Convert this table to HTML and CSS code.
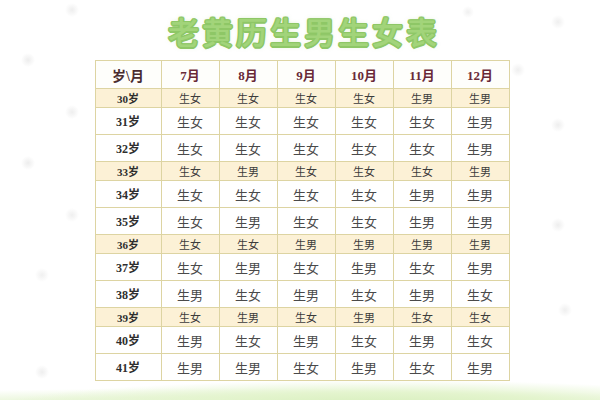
FILE: index.html
```html
<!DOCTYPE html>
<html lang="zh">
<head>
<meta charset="utf-8">
<title>老黄历生男生女表</title>
<link rel="stylesheet" href="styles.css">
</head>
<body>
<div class="page">
  <h1 class="title">老黄历生男生女表</h1>
  <table class="chart">
    <colgroup>
      <col class="c-label"><col class="c-m"><col class="c-m"><col class="c-m"><col class="c-m"><col class="c-m"><col class="c-m">
    </colgroup>
    <tr class="head"><th class="corner">岁\月</th><th>7月</th><th>8月</th><th>9月</th><th>10月</th><th>11月</th><th>12月</th></tr>
    <tr class="short"><td class="age">30岁</td><td>生女</td><td>生女</td><td>生女</td><td>生女</td><td>生男</td><td>生男</td></tr>
    <tr class="tall"><td class="age">31岁</td><td>生女</td><td>生女</td><td>生女</td><td>生女</td><td>生女</td><td>生男</td></tr>
    <tr class="tall"><td class="age">32岁</td><td>生女</td><td>生女</td><td>生女</td><td>生女</td><td>生女</td><td>生男</td></tr>
    <tr class="short"><td class="age">33岁</td><td>生女</td><td>生男</td><td>生女</td><td>生女</td><td>生女</td><td>生男</td></tr>
    <tr class="tall"><td class="age">34岁</td><td>生女</td><td>生女</td><td>生女</td><td>生女</td><td>生男</td><td>生男</td></tr>
    <tr class="tall"><td class="age">35岁</td><td>生女</td><td>生男</td><td>生女</td><td>生女</td><td>生男</td><td>生男</td></tr>
    <tr class="short"><td class="age">36岁</td><td>生女</td><td>生女</td><td>生男</td><td>生男</td><td>生男</td><td>生男</td></tr>
    <tr class="tall"><td class="age">37岁</td><td>生女</td><td>生男</td><td>生女</td><td>生男</td><td>生女</td><td>生男</td></tr>
    <tr class="tall"><td class="age">38岁</td><td>生男</td><td>生女</td><td>生男</td><td>生女</td><td>生男</td><td>生女</td></tr>
    <tr class="short"><td class="age">39岁</td><td>生女</td><td>生男</td><td>生女</td><td>生男</td><td>生女</td><td>生女</td></tr>
    <tr class="tall"><td class="age">40岁</td><td>生男</td><td>生女</td><td>生男</td><td>生女</td><td>生男</td><td>生女</td></tr>
    <tr class="tall"><td class="age">41岁</td><td>生男</td><td>生男</td><td>生女</td><td>生男</td><td>生女</td><td>生男</td></tr>
  </table>
</div>
</body>
</html>
```
FILE: styles.css
```css
html, body {
  margin: 0;
  padding: 0;
}
body {
  width: 600px;
  height: 400px;
  overflow: hidden;
  background:
    radial-gradient(ellipse 380px 26px at 380px 406px, #d6eebb 0%, #e3f4cd 50%, rgba(255,255,255,0) 100%),
    radial-gradient(ellipse 560px 22px at 240px 410px, #e0f1ca 0%, #ecf7de 60%, rgba(255,255,255,0) 100%),
    radial-gradient(circle 7px at 72px 10px, #eeeeee, rgba(255,255,255,0)),
    radial-gradient(circle 7px at 28px 60px, #ededed, rgba(255,255,255,0)),
    radial-gradient(circle 7px at 72px 112px, #eeeeee, rgba(255,255,255,0)),
    radial-gradient(circle 7px at 28px 163px, #ededed, rgba(255,255,255,0)),
    radial-gradient(circle 7px at 72px 215px, #efefef, rgba(255,255,255,0)),
    radial-gradient(circle 7px at 42px 275px, #f0f0f0, rgba(255,255,255,0)),
    radial-gradient(circle 7px at 42px 372px, #eeeeee, rgba(255,255,255,0)),
    radial-gradient(circle 6px at 468px 12px, #f0f0f0, rgba(255,255,255,0)),
    radial-gradient(circle 7px at 558px 22px, #efefef, rgba(255,255,255,0)),
    radial-gradient(circle 7px at 518px 70px, #efefef, rgba(255,255,255,0)),
    radial-gradient(circle 7px at 558px 125px, #eeeeee, rgba(255,255,255,0)),
    radial-gradient(circle 7px at 558px 225px, #eeeeee, rgba(255,255,255,0)),
    radial-gradient(circle 7px at 565px 310px, #efefef, rgba(255,255,255,0)),
    #ffffff;
  font-family: "Noto Sans CJK SC", sans-serif;
}
.page {
  display: flex;
  flex-direction: column;
  align-items: center;
}
.title {
  margin: 13px 0 0 8px;
  height: 47px;
  font-family: "Noto Sans CJK SC", sans-serif;
  font-weight: 500;
  font-size: 31px;
  line-height: 36px;
  letter-spacing: 3px;
  color: #a2d47a;
  -webkit-text-stroke: 3px #ffffff;
  paint-order: stroke fill;
  text-shadow:
    1.5px 0 0 #8ec766, -1.5px 0 0 #8ec766, 0 1.5px 0 #8ec766, 0 -1.5px 0 #8ec766,
    1.1px 1.1px 0 #8ec766, -1.1px -1.1px 0 #8ec766, 1.1px -1.1px 0 #8ec766, -1.1px 1.1px 0 #8ec766,
    0 0 4px rgba(160, 210, 120, 0.5);
}
.chart {
  margin-left: 4px;
  border-collapse: collapse;
  table-layout: fixed;
  width: 414px;
  border: 1px solid #d6cc94;
}
.c-label { width: 66px; }
.c-m { width: 58px; }
.chart th, .chart td {
  border: 1px solid #ddd4a2;
  padding: 0;
  text-align: center;
  vertical-align: middle;
}
.head { height: 28px; background: #fefefb; }
.head th {
  font-family: "Liberation Serif", "Noto Sans CJK SC", serif;
  font-weight: bold;
  font-size: 13px;
  color: #6a2a38;
}
.head th.corner { font-size: 14px; color: #4a2c30; }
.tall { height: 27px; background: #ffffff; }
.short { height: 19px; background: #fcf1d6; }
.chart td {
  font-size: 13px;
  color: #4a4a4a;
}
.short td { font-size: 11px; color: #3c3c3c; }
.chart td.age {
  font-family: "Liberation Serif", "Noto Sans CJK SC", serif;
  font-weight: bold;
  font-size: 12px;
  color: #2e2e2e;
}
.short td.age { font-size: 11px; }
```
